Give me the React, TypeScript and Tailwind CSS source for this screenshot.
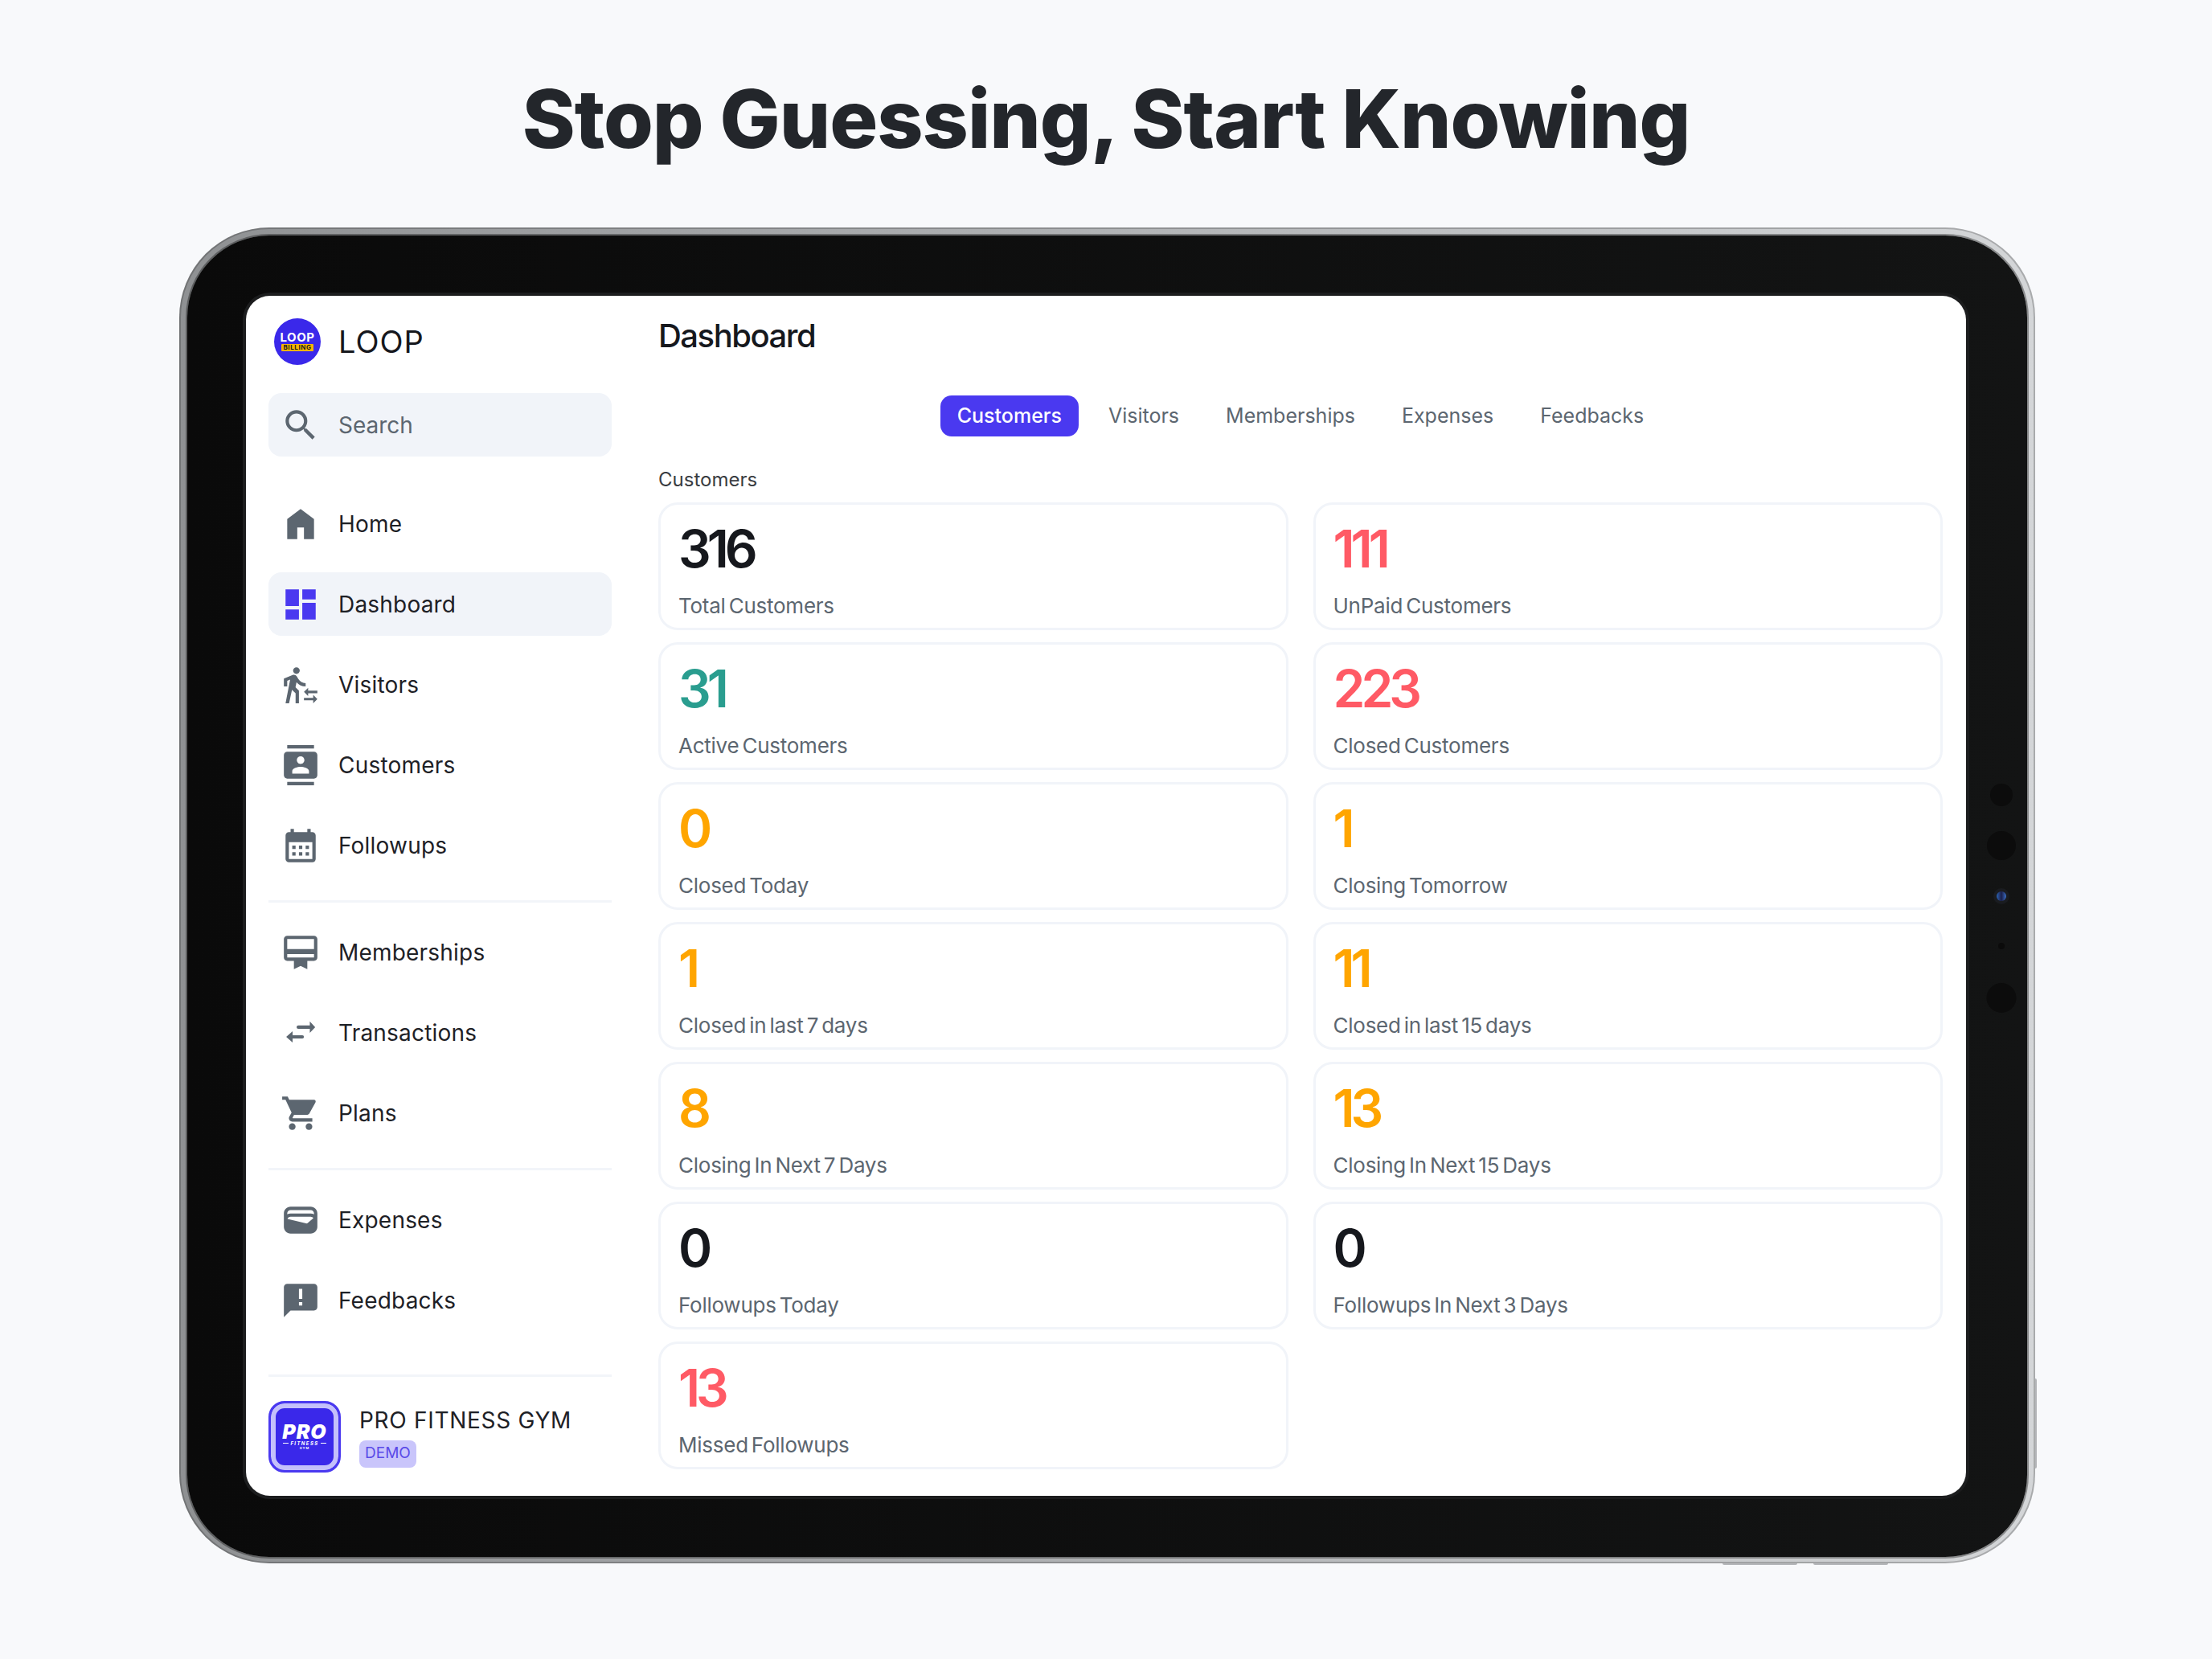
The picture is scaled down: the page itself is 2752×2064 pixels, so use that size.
import type { ReactNode } from 'react';
import {
  MdAnnouncement,
  MdCalendarMonth,
  MdCardMembership,
  MdContacts,
  MdDashboard,
  MdSearch,
  MdShoppingCart,
  MdTransferWithinAStation,
  MdWallet,
} from 'react-icons/md';

function HomeIcon({ className }: { className?: string }) {
  return (
    <svg viewBox="0 0 24 24" fill="currentColor" className={className}>
      <path d="M4 21V9l8-6 8 6v12h-6v-7h-4v7z" />
    </svg>
  );
}

function TransactionsIcon({ className }: { className?: string }) {
  return (
    <svg viewBox="0 0 24 24" fill="currentColor" className={className}>
      <path d="M10.6 7.6h6.9V5.2l3.2 3.4-3.2 3.4V9.6h-6.9a1 1 0 0 1 0-2z" />
      <path d="M13 13.4H7.2V11l-3.8 3.4 3.8 3.4v-2.4H13a1 1 0 0 0 0-2z" />
    </svg>
  );
}

type NavItem = { name: string; icon: (props: { className?: string }) => ReactNode; active?: boolean };

const groups: NavItem[][] = [
  [
    { name: 'Home', icon: HomeIcon },
    { name: 'Dashboard', icon: MdDashboard, active: true },
    { name: 'Visitors', icon: MdTransferWithinAStation },
    { name: 'Customers', icon: MdContacts },
    { name: 'Followups', icon: MdCalendarMonth },
  ],
  [
    { name: 'Memberships', icon: MdCardMembership },
    { name: 'Transactions', icon: TransactionsIcon },
    { name: 'Plans', icon: MdShoppingCart },
  ],
  [
    { name: 'Expenses', icon: MdWallet },
    { name: 'Feedbacks', icon: MdAnnouncement },
  ],
];

const tabs = ['Customers', 'Visitors', 'Memberships', 'Expenses', 'Feedbacks'];

const dark = 'text-[#16181d]';
const red = 'text-[#ff5a65]';
const teal = 'text-[#2a9d8f]';
const orange = 'text-[#ffa500]';

const stats = [
  { value: '316', label: 'Total Customers', color: dark },
  { value: '111', label: 'UnPaid Customers', color: red },
  { value: '31', label: 'Active Customers', color: teal },
  { value: '223', label: 'Closed Customers', color: red },
  { value: '0', label: 'Closed Today', color: orange },
  { value: '1', label: 'Closing Tomorrow', color: orange },
  { value: '1', label: 'Closed in last 7 days', color: orange },
  { value: '11', label: 'Closed in last 15 days', color: orange },
  { value: '8', label: 'Closing In Next 7 Days', color: orange },
  { value: '13', label: 'Closing In Next 15 Days', color: orange },
  { value: '0', label: 'Followups Today', color: dark },
  { value: '0', label: 'Followups In Next 3 Days', color: dark },
  { value: '13', label: 'Missed Followups', color: red },
];

function Sidebar() {
  return (
    <aside className="w-[513px] shrink-0 pl-[28px] pr-[58px] pt-[28px] flex flex-col">
      <div className="flex items-center h-[58px] pl-[7px] gap-[22px]">
        <div className="w-[58px] h-[58px] rounded-full bg-[#3a28ea] flex flex-col items-center justify-center shrink-0">
          <span className="text-white font-bold text-[15px] leading-[13px] tracking-[0.5px]">LOOP</span>
          <span className="bg-[#f5b400] text-[#1a1a1a] font-bold text-[8px] leading-[9px] w-[40px] text-center tracking-[0.6px] rounded-[1px] mt-[2px]">
            BILLING
          </span>
        </div>
        <span className="text-[38px] leading-none text-[#16181d] tracking-[1px]">LOOP</span>
      </div>

      <div className="mt-[35px] h-[79px] rounded-[16px] bg-[#f1f4f9] flex items-center pl-[15px] gap-[22px] shrink-0">
        <MdSearch className="w-[50px] h-[50px] text-[#5c6670] shrink-0" />
        <span className="text-[28px] text-[#5c6670]">Search</span>
      </div>

      <div className="mt-[44px] flex flex-col">
        {groups.map((group, i) => (
          <div key={i}>
            {i > 0 && <div className="h-[3px] bg-[#f2f5f9] mt-[29px] mb-[22px]" />}
            <div className="flex flex-col gap-[21px]">
              {group.map((item) => (
                <div
                  key={item.name}
                  className={`h-[79px] rounded-[16px] flex items-center pl-[15px] gap-[22px] ${item.active ? 'bg-[#f1f4f9]' : ''}`}
                >
                  <item.icon className={`w-[50px] h-[50px] shrink-0 ${item.active ? 'text-[#4a39f0]' : 'text-[#5c6670]'}`} />
                  <span className="text-[28px] text-[#1e2126] tracking-[0.2px]">{item.name}</span>
                </div>
              ))}
            </div>
          </div>
        ))}
      </div>

      <div className="h-[3px] bg-[#f2f5f9] mt-[53px] shrink-0" />
      <div className="mt-[30px] flex items-center gap-[23px]">
        <div className="w-[90px] h-[89px] rounded-[20px] bg-[#3a28ea] border-[3px] border-[#4a39f0] shrink-0 overflow-hidden">
          <div className="w-full h-full rounded-[17px] border-[6px] border-[#c4c0fb] bg-[#3a28ea] flex flex-col items-center justify-center">
            <span className="text-white font-black italic text-[25px] leading-[19px] tracking-[1px]">PRO</span>
            <div className="flex items-center gap-[2px] mt-[2px]">
              <div className="w-[7px] h-px bg-white" />
              <span className="text-white font-bold italic text-[6px] leading-[6px] tracking-[1.4px]">FITNESS</span>
              <div className="w-[7px] h-px bg-white" />
            </div>
            <span className="text-white font-bold text-[4px] leading-[5px] tracking-[1px]">GYM</span>
          </div>
        </div>
        <div className="flex flex-col">
          <span className="text-[28px] leading-[34px] text-[#1e2126] tracking-[0.7px]">PRO FITNESS GYM</span>
          <span className="mt-[8px] w-[71px] h-[34px] rounded-[8px] bg-[#c9c5fb] text-[#5a4ae8] text-[19px] flex items-center justify-center">
            DEMO
          </span>
        </div>
      </div>
    </aside>
  );
}

function Main() {
  return (
    <main className="flex-1 pr-[29px] pt-[26px] min-w-0">
      <h1 className="text-[40px] leading-[48px] font-medium text-[#16181d] tracking-[-1.5px]">Dashboard</h1>

      <div className="mt-[50px] flex justify-center gap-[16px]">
        {tabs.map((tab, i) => (
          <div
            key={tab}
            className={`h-[51px] px-[21px] rounded-[14px] flex items-center text-[25px] ${i === 0 ? 'bg-[#4a39f0] text-white font-medium' : 'text-[#5c6670]'}`}
          >
            {tab}
          </div>
        ))}
      </div>

      <div className="mt-[38px] mb-[12px] text-[24px] leading-[32px] text-[#3a3d42]">Customers</div>

      <div className="grid grid-cols-2 gap-x-[31px] gap-y-[15px]">
        {stats.map((stat) => (
          <div key={stat.label} className="h-[159px] rounded-[24px] border-[3px] border-[#f1f4f9] pl-[22px] pt-[23px]">
            <div className={`text-[64px] leading-[64px] font-semibold tracking-[-5px] ${stat.color}`}>{stat.value}</div>
            <div className="mt-[23px] text-[26px] leading-[32px] text-[#5c6670] tracking-[-0.25px] [word-spacing:-3px]">{stat.label}</div>
          </div>
        ))}
      </div>
    </main>
  );
}

export default function App() {
  return (
    <div className="min-h-[2064px] bg-[#f8f9fb] font-['Inter',sans-serif] overflow-hidden">
      <h2 className="pt-[88px] h-[283px] text-center text-[100px] leading-[120px] font-extrabold tracking-[-1px] text-[#23262b]">
        Stop Guessing, Start Knowing
      </h2>

      <div className="relative ml-[223px] w-[2309px] h-[1662px]">
        {/* side and bottom buttons poke out of the frame */}
        <div className="absolute left-[1920px] top-[1658px] w-[93px] h-[6px] rounded-b-[2px] bg-[#b4b6b9]" />
        <div className="absolute left-[2033px] top-[1658px] w-[93px] h-[6px] rounded-b-[2px] bg-[#b4b6b9]" />
        <div className="absolute left-[2307px] top-[1432px] w-[4px] h-[112px] rounded-r-[2px] bg-[#b4b6b9]" />

        <div className="relative w-full h-full rounded-[112px] bg-gradient-to-r from-[#8f9193] to-[#d4d6d8] shadow-[inset_0_0_0_2px_rgba(0,0,0,0.2)] px-[10px] pt-[10px] pb-[8px]">
          <div className="w-full h-full rounded-[102px] bg-gradient-to-r from-[#0a0a0a] to-[#131414] shadow-[0_0_0_2px_rgba(0,0,0,0.35)] pl-[73px] pr-[76px] pt-[75px] pb-[76px]">
            <div className="w-full h-full rounded-[30px] bg-white flex overflow-hidden shadow-[0_0_0_4px_#1c1d1e]">
              <Sidebar />
              <Main />
            </div>
          </div>

          {/* camera strip on the right bezel */}
          <div className="absolute left-[2267px] top-[692px] -translate-x-1/2 w-[28px] h-[28px] rounded-full bg-[#0c0c0c]" />
          <div className="absolute left-[2267px] top-[751px] -translate-x-1/2 w-[36px] h-[36px] rounded-full bg-[#0c0c0c]" />
          <div className="absolute left-[2267px] top-[822px] -translate-x-1/2 w-[20px] h-[20px] rounded-full bg-[#1a1c20] flex items-center justify-center">
            <div className="w-[12px] h-[12px] rounded-full bg-gradient-to-r from-[#2a66b8] via-[#1a1f4a] to-[#3a70c8]" />
          </div>
          <div className="absolute left-[2267px] top-[890px] -translate-x-1/2 w-[8px] h-[8px] rounded-full bg-[#0b0b0b]" />
          <div className="absolute left-[2267px] top-[940px] -translate-x-1/2 w-[37px] h-[37px] rounded-full bg-[#0c0c0c]" />
        </div>
      </div>
    </div>
  );
}
